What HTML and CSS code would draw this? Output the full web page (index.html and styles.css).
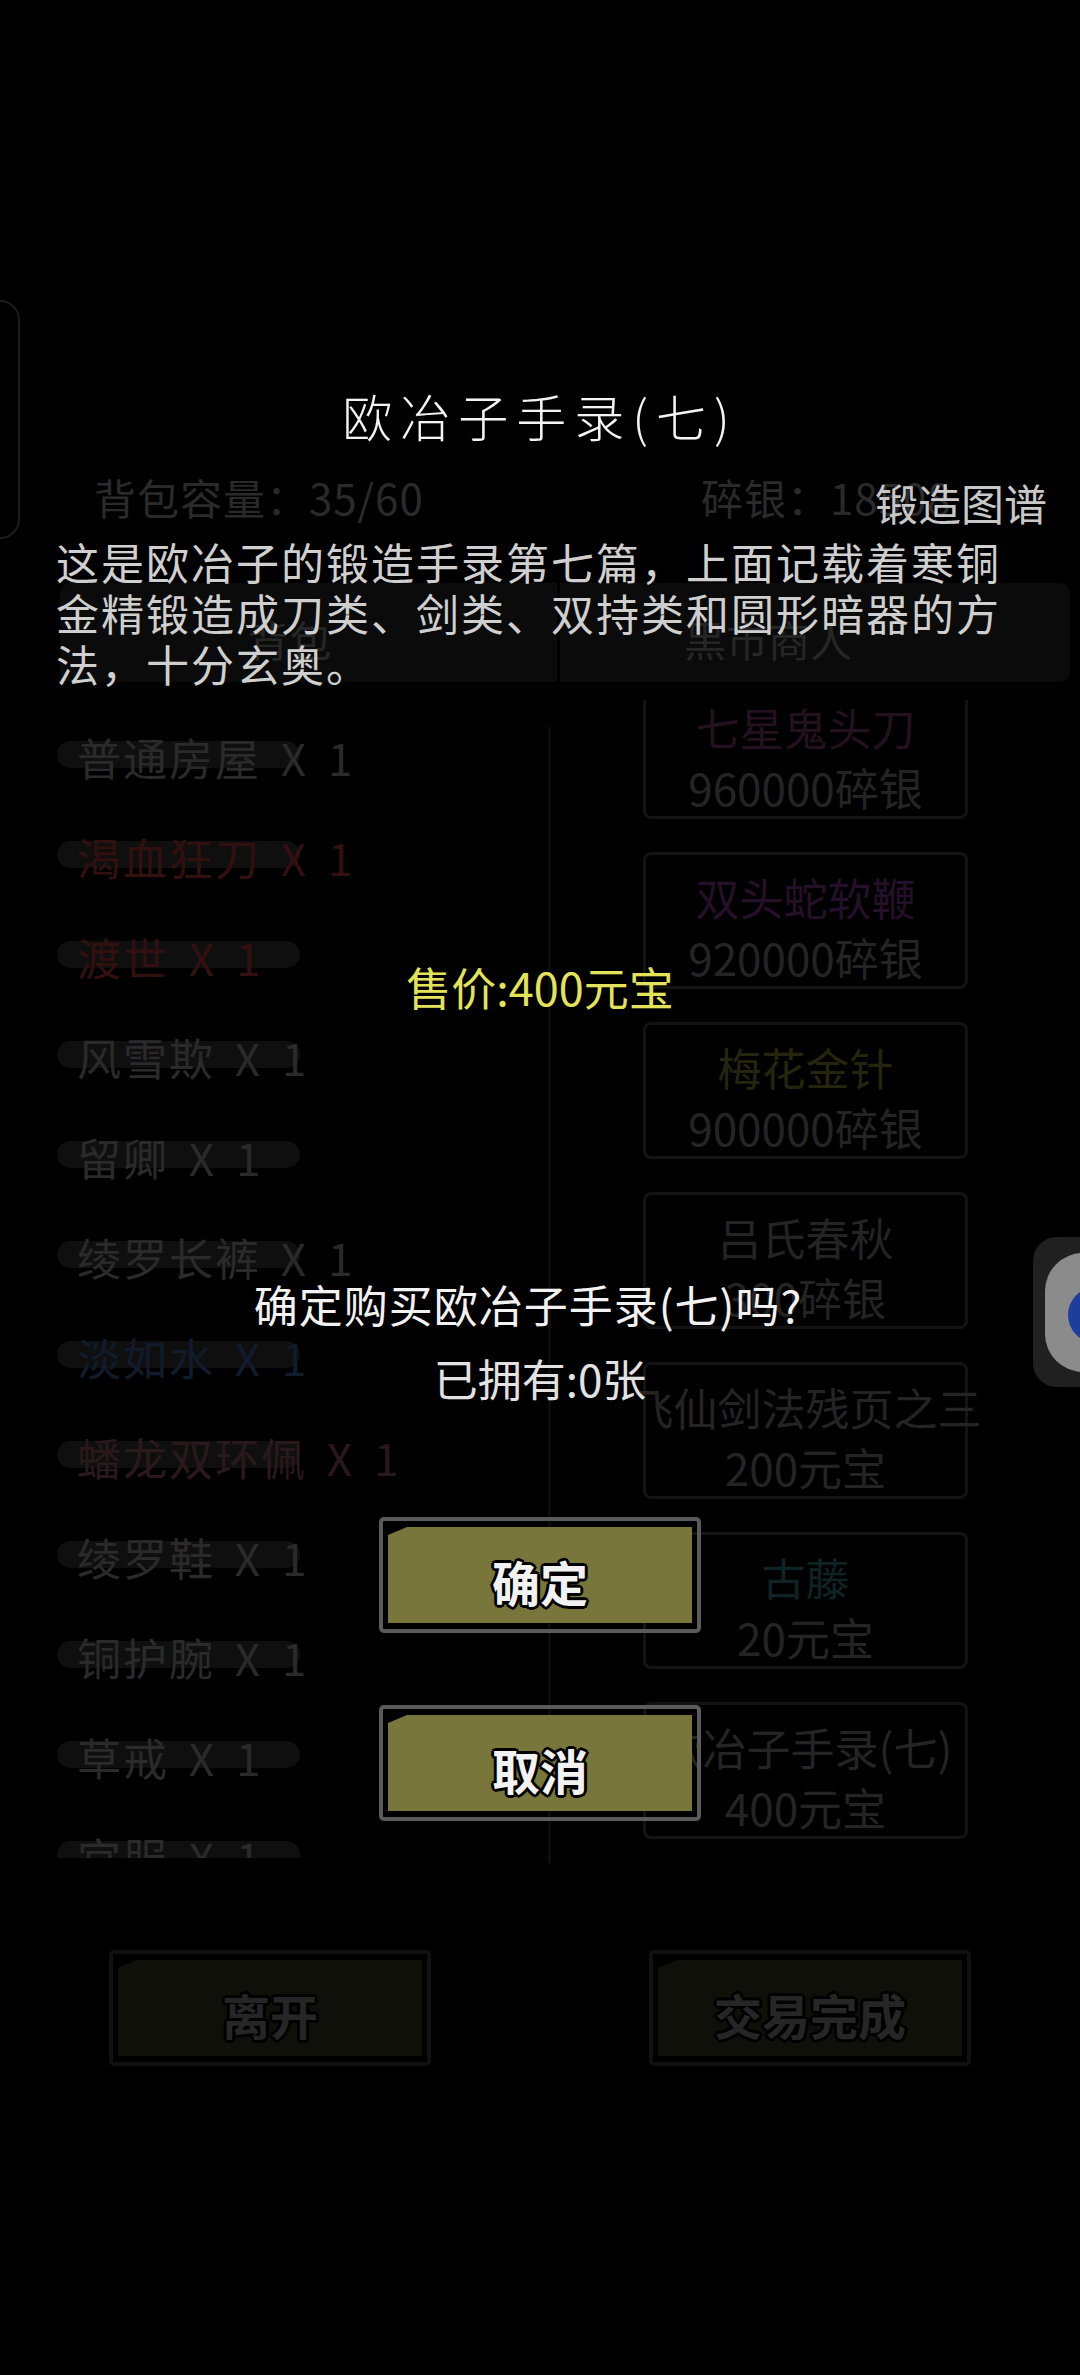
FILE: index.html
```html
<!DOCTYPE html>
<html lang="zh-CN">
<head>
    <meta charset="UTF-8">
    <meta name="viewport" content="width=device-width, initial-scale=1.0">
    <title>黑市商人</title>
    <link rel="stylesheet" href="styles.css">
</head>
<body>
    <div class="screen">
        <div class="side-tab"></div>

        <main class="shop">
            <div class="stats">
                <span>背包容量：35/60</span>
                <span>碎银：18508</span>
            </div>
            <div class="tabs">
                <div class="tab tab-bag">背包</div>
                <div class="tab-sep"></div>
                <div class="tab tab-market">黑市商人</div>
            </div>
            <div class="content">
                <div class="bag-list">
                    <div class="bag-item">普通房屋 X 1</div>
                    <div class="bag-item red">渴血狂刀 X 1</div>
                    <div class="bag-item red">渡世 X 1</div>
                    <div class="bag-item">风雪欺 X 1</div>
                    <div class="bag-item">留卿 X 1</div>
                    <div class="bag-item">绫罗长裤 X 1</div>
                    <div class="bag-item blue">淡如水 X 1</div>
                    <div class="bag-item plum">蟠龙双环佩 X 1</div>
                    <div class="bag-item">绫罗鞋 X 1</div>
                    <div class="bag-item">铜护腕 X 1</div>
                    <div class="bag-item">草戒 X 1</div>
                    <div class="bag-item">宫服 X 1</div>
                </div>
                <div class="divider"></div>
                <div class="goods-list">
                    <div class="goods">
                        <div class="goods-name purple">七星鬼头刀</div>
                        <div class="goods-price">960000碎银</div>
                    </div>
                    <div class="goods">
                        <div class="goods-name violet">双头蛇软鞭</div>
                        <div class="goods-price">920000碎银</div>
                    </div>
                    <div class="goods">
                        <div class="goods-name olive">梅花金针</div>
                        <div class="goods-price">900000碎银</div>
                    </div>
                    <div class="goods">
                        <div class="goods-name">吕氏春秋</div>
                        <div class="goods-price">300碎银</div>
                    </div>
                    <div class="goods">
                        <div class="goods-name">飞仙剑法残页之三</div>
                        <div class="goods-price">200元宝</div>
                    </div>
                    <div class="goods">
                        <div class="goods-name teal">古藤</div>
                        <div class="goods-price">20元宝</div>
                    </div>
                    <div class="goods">
                        <div class="goods-name">欧冶子手录(七)</div>
                        <div class="goods-price">400元宝</div>
                    </div>
                </div>
            </div>
            <div class="footer">
                <div class="btn dim"><div class="btn-face">离开</div></div>
                <div class="btn dim"><div class="btn-face">交易完成</div></div>
            </div>
        </main>

        <div class="float-ball">
            <div class="ball-ring"></div>
            <div class="ball-dot"></div>
        </div>

        <div class="dialog">
            <h1 class="item-title">欧冶子手录(七)</h1>
            <div class="item-type">锻造图谱</div>
            <p class="item-desc">这是欧冶子的锻造手录第七篇，上面记载着寒铜金精锻造成刀类、剑类、双持类和圆形暗器的方法，十分玄奥。</p>
            <div class="item-price">售价:400元宝</div>
            <div class="confirm-text">确定购买欧冶子手录(七)吗?</div>
            <div class="owned-text">已拥有:0张</div>
            <div class="dialog-actions">
                <div class="btn"><div class="btn-face">确定</div></div>
                <div class="btn"><div class="btn-face">取消</div></div>
            </div>
        </div>
    </div>
</body>
</html>
```

FILE: styles.css
```css
body, html {
    margin: 0;
    padding: 0;
    background-color: #000;
    font-family: "Noto Sans CJK SC", "Noto Sans", sans-serif;
}
.screen {
    position: relative;
    width: 1080px;
    height: 2375px;
    overflow: hidden;
    background-color: #000;
}

/* edge widgets */
.side-tab {
    position: absolute;
    left: -22px;
    top: 300px;
    width: 38px;
    height: 235px;
    border: 2px solid #1c1c1c;
    border-radius: 20px;
}
.float-ball {
    position: absolute;
    left: 1033px;
    top: 1237px;
    width: 90px;
    height: 150px;
    background-color: #202020;
    border-radius: 24px;
}
.ball-ring {
    position: absolute;
    left: 12px;
    top: 16px;
    width: 100px;
    height: 119px;
    background-color: #8b8b8b;
    border-radius: 38px;
}
.ball-dot {
    position: absolute;
    left: 35px;
    top: 50px;
    width: 56px;
    height: 56px;
    background-color: #1d3e9c;
    border-radius: 50%;
}

/* dimmed shop page underneath */
.shop {
    padding-top: 472px;
}
.stats {
    display: grid;
    grid-template-columns: 607px auto;
    padding-left: 94px;
    font-size: 42px;
    line-height: 50px;
    letter-spacing: 1px;
    color: #2a2a2a;
}
.tabs {
    display: flex;
    margin: 61px 0 0 60px;
    width: 1010px;
    height: 99px;
    background-color: #0b0b0b;
    border-radius: 10px;
}
.tab {
    display: flex;
    align-items: center;
    justify-content: center;
    padding-top: 12px;
    box-sizing: border-box;
    font-size: 42px;
    color: #262626;
}
.tab-bag {
    width: 497px;
    padding-right: 38px;
}
.tab-sep {
    width: 3px;
    background-color: #000;
}
.tab-market {
    width: 510px;
    padding-right: 94px;
}
.content {
    display: flex;
    margin-top: 18px;
    height: 1158px;
}
.bag-list {
    width: 548px;
    padding-top: 7px;
    overflow: hidden;
    box-sizing: border-box;
}
.bag-item {
    position: relative;
    isolation: isolate;
    height: 100px;
    line-height: 100px;
    padding-left: 77px;
    font-size: 44px;
    letter-spacing: 2px;
    word-spacing: 8px;
    color: #2a2a2a;
    white-space: nowrap;
}
.bag-item::before {
    content: "";
    position: absolute;
    left: 57px;
    top: 34px;
    width: 243px;
    height: 27px;
    border-radius: 14px;
    background-color: #0f0f0f;
    z-index: -1;
}
.bag-item.red { color: #331010; }
.bag-item.blue { color: #101b2c; }
.bag-item.plum { color: #2a191c; }
.divider {
    width: 3px;
    margin-top: 27px;
    margin-bottom: -5px;
    background-color: #0c0c0c;
}
.goods-list {
    width: 420px;
    margin-left: 89px;
    overflow: hidden;
}
.goods {
    width: 325px;
    height: 137px;
    margin: 0 0 33px 3px;
    padding-top: 12px;
    box-sizing: border-box;
    border: 3px solid #131313;
    border-radius: 8px;
    text-align: center;
    white-space: nowrap;
}
.goods:first-child {
    margin-top: -18px;
}
.goods-name, .goods-price {
    display: flex;
    justify-content: center;
    height: 60px;
    line-height: 60px;
    font-size: 44px;
    color: #242424;
}
.goods-name.purple { color: #24111f; }
.goods-name.violet { color: #251029; }
.goods-name.olive { color: #25250e; }
.goods-name.teal { color: #0e2424; }
.footer {
    display: flex;
    gap: 218px;
    margin-top: 92px;
    padding-left: 109px;
}

/* chamfered buttons */
.btn {
    width: 322px;
    height: 116px;
    box-sizing: border-box;
    border: 4px solid #5b5b5b;
    border-radius: 5px;
    padding: 6px 5px;
}
.btn-face {
    display: flex;
    align-items: center;
    justify-content: center;
    height: 100%;
    padding-top: 12px;
    box-sizing: border-box;
    background-color: #78763a;
    clip-path: polygon(0 8px, 19px 0, 100% 0, 100% 100%, 0 100%);
    font-size: 48px;
    font-weight: 700;
    color: #f2f2f2;
    text-shadow: -3px 0 #000, 3px 0 #000, 0 -3px #000, 0 3px #000,
        -2px -2px #000, 2px -2px #000, -2px 2px #000, 2px 2px #000;
}
.btn.dim {
    border-color: #111;
}
.btn.dim .btn-face {
    background-color: #10100a;
    color: #262626;
}

/* purchase dialog */
.dialog {
    position: absolute;
    left: 0;
    top: 0;
    width: 1080px;
    padding-top: 385px;
    text-align: center;
}
.item-title {
    margin: 0;
    font-size: 50px;
    font-weight: 300;
    line-height: 60px;
    letter-spacing: 8px;
    color: #f4f4f4;
}
.item-type {
    margin-top: 32px;
    padding-right: 33px;
    text-align: right;
    font-size: 43px;
    line-height: 50px;
    color: #c8c8c8;
}
.item-desc {
    margin: 9px 0 0;
    padding: 0 56px;
    text-align: left;
    font-size: 43px;
    line-height: 51px;
    letter-spacing: 2px;
    color: #cfcfcf;
}
.item-price {
    margin-top: 270px;
    font-size: 45px;
    line-height: 56px;
    color: #e3e35a;
}
.confirm-text {
    margin-top: 261px;
    padding-right: 24px;
    font-size: 44px;
    line-height: 56px;
    letter-spacing: 1px;
    color: #f2f2f2;
}
.owned-text {
    margin-top: 18px;
    font-size: 44px;
    line-height: 56px;
    color: #e2e2e2;
}
.dialog-actions {
    display: flex;
    flex-direction: column;
    align-items: center;
    gap: 72px;
    margin-top: 111px;
}
```
